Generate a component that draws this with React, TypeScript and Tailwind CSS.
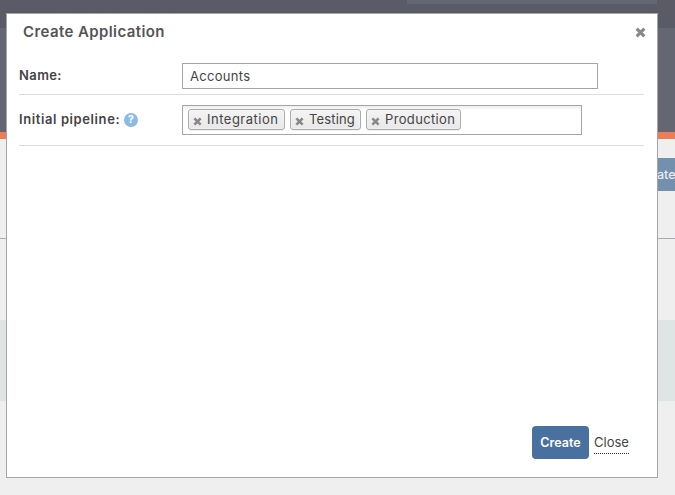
import React from "react";

function CrossIcon({ size, color }: { size: number; color: string }) {
  return (
    <svg width={size} height={size} viewBox="0 0 10 10" className="block shrink-0">
      <path d="M1.5 1.5 L8.5 8.5 M8.5 1.5 L1.5 8.5" stroke={color} strokeWidth="2.8" />
    </svg>
  );
}

function Chip({ label, className }: { label: string; className: string }) {
  return (
    <div
      className={`flex h-[21px] shrink-0 items-center rounded-[3px] border border-[#aaa] bg-linear-to-b from-[#f4f4f4] to-[#e8e8e8] pl-1 shadow-[inset_0_0_2px_#fff,0_1px_0_rgba(0,0,0,0.05)] ${className}`}
    >
      <span className="mt-[3px]">
        <CrossIcon size={9} color="#888" />
      </span>
      <span className="ml-[5px] whitespace-nowrap text-[13px] leading-[19px]">{label}</span>
    </div>
  );
}

function Backdrop() {
  return (
    <div className="flex h-full flex-col bg-[#efefef]">
      <div className="flex h-7 shrink-0 justify-end bg-[#5a5b66] pr-[18px]">
        <div className="h-1 w-[250px] bg-[#646672]" />
      </div>
      <div className="h-[104px] shrink-0 bg-[#646772]" />
      <div className="h-[7px] shrink-0 bg-[#e97e58]" />
      <div className="flex h-[99px] shrink-0 justify-end pt-[19px]">
        <div className="h-[33px] w-[18px] overflow-hidden whitespace-nowrap bg-[#7390ae] text-[12.5px] font-medium leading-[33px] text-[#e8edf2]">
          ate
        </div>
      </div>
      <div className="h-px shrink-0 bg-[#9cacbc]" />
      <div className="mt-[81px] h-[81px] shrink-0 bg-[#dfe4e4]" />
    </div>
  );
}

export default function App() {
  return (
    <div className="relative h-[495px] w-[675px] overflow-hidden font-[Inter,sans-serif] text-[#444]">
      <Backdrop />
      <section className="absolute left-[6px] top-[13px] flex h-[465px] w-[652px] flex-col border border-[#a5a5a5] bg-white">
        <header className="flex h-[49px] shrink-0 justify-between pl-4 pr-[11px] pt-2">
          <h1 className="whitespace-nowrap text-[15px] font-semibold leading-5 tracking-[0.4px] text-[#555]">
            Create Application
          </h1>
          <div className="mt-[5px]">
            <CrossIcon size={11} color="#888" />
          </div>
        </header>
        <div className="ml-3 flex h-8 w-[625px] shrink-0 border-b border-[#ddd]">
          <label className="w-[163px] text-[13px] font-semibold leading-[25px] tracking-[0.4px]">Name:</label>
          <div className="h-[26px] w-[416px] border border-[#a5a5a5] pl-[7px] text-[13px] leading-[25px] tracking-[0.3px]">
            Accounts
          </div>
        </div>
        <div className="ml-3 flex h-[51px] w-[625px] shrink-0 border-b border-[#ddd] pt-[10px]">
          <div className="flex w-[163px] items-center gap-[3.5px] self-start">
            <span className="whitespace-nowrap text-[13px] font-semibold leading-[29px] tracking-[0.6px]">Initial pipeline:</span>
            <span className="flex h-[14px] w-[14px] items-center justify-center rounded-full bg-[#8bbae6] text-[11px] font-bold leading-none text-white">
              ?
            </span>
          </div>
          <div className="flex h-[30px] w-[400px] gap-[5px] border border-[#a5a5a5] bg-[linear-gradient(#eee_1%,#fff_15%)] pl-[5px] pt-[3px]">
            <Chip label="Integration" className="w-[97px] tracking-[0.5px]" />
            <Chip label="Testing" className="w-[71px] tracking-[0.15px]" />
            <Chip label="Production" className="w-[95px] tracking-[0.35px]" />
          </div>
        </div>
        <footer className="mt-auto flex h-[51px] shrink-0 items-start gap-[5px] pl-[525px]">
          <button className="h-[33px] w-[57px] rounded-[4px] bg-[#4871a0] text-[12.5px] font-semibold leading-[33px] text-white">
            Create
          </button>
          <a className="mt-[7px] h-[21px] w-[35px] whitespace-nowrap border-b border-dotted border-[#333] text-[13px] leading-[19px]">
            Close
          </a>
        </footer>
      </section>
    </div>
  );
}
